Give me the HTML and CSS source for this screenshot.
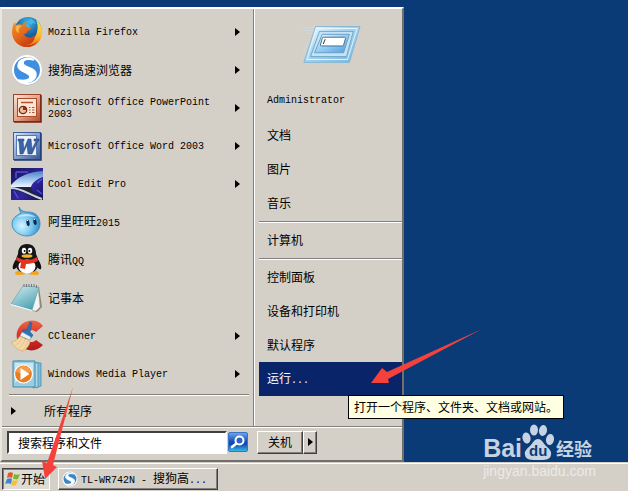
FILE: index.html
```html
<!DOCTYPE html>
<html lang="zh-CN">
<head>
    <meta charset="UTF-8">
    <meta name="viewport" content="width=device-width, initial-scale=1.0">
    <title>开始菜单</title>
    <link rel="stylesheet" href="styles.css">
</head>
<body>
    <main class="desktop">
        <div class="start-menu">
            <div class="menu-body">
                <div class="left-col">
                    <ul class="programs">
                        <li><a href="#">
                            <svg class="icon" viewBox="0 0 32 32" aria-hidden="true">
                                <defs>
                                    <radialGradient id="ffGlobe" cx=".5" cy=".2" r=".8"><stop offset="0" stop-color="#3fb8e8"/><stop offset=".5" stop-color="#1c6cae"/><stop offset="1" stop-color="#123a7c"/></radialGradient>
                                    <linearGradient id="ffFox" x1="0" y1="0" x2=".7" y2="1"><stop offset="0" stop-color="#f0962a"/><stop offset=".5" stop-color="#e66a1c"/><stop offset="1" stop-color="#c2330f"/></linearGradient>
                                    <linearGradient id="ffTail" x1="0" y1="0" x2="0" y2="1"><stop offset="0" stop-color="#fff04a"/><stop offset=".6" stop-color="#fbb62a"/><stop offset="1" stop-color="#e6661a"/></linearGradient>
                                </defs>
                                <circle cx="17" cy="14.500" r="13.500" fill="url(#ffGlobe)"/>
                                <path d="M19 3c3 0 5 2 6 5l-3-1-2 2-2-3zM14 7l4 2 2 4-5 1z" fill="#4cc3ea" opacity=".7"/>
                                <path d="M25 4c4 3 6 8 6 12 0 9-6 15-15 15-5 0-9-2-12-6 8 3 20 1 22-9 1-5 1-8-1-12z" fill="url(#ffTail)"/>
                                <path d="M4 6l1 3c2-1 4-1 6 0 1-2 3-3 5-4-1 2-2 4-1 5 1 2 4 1 5 2 0 2-3 2-4 4 0 1-1 2-3 2 1 4 7 5 11 1 0 7-5 10-10 10 5 1 10-1 13-4-3 4-7 6-11 6C7 31 1 24 1 16c0-4 1-7 3-10z" fill="url(#ffFox)"/>
                                <path d="M5 10c2-1 4-1 6 0-3 1-4 4-3 7-3-1-4-4-3-7z" fill="#f8b24a"/>
                            </svg>
                            <span class="label en">Mozilla Firefox</span><i class="arrow"></i>
                        </a></li>
                        <li><a href="#">
                            <svg class="icon" viewBox="0 0 32 32" aria-hidden="true">
                                <circle cx="16" cy="16.500" r="15" fill="#aaa"/>
                                <circle cx="16" cy="16" r="15" fill="#fff"/>
                                <circle cx="16" cy="16" r="13" fill="#3f8ee0"/>
                                <path d="M23 6C17 2 7 5 7 12c0 6 12 6 12 11 0 3-5 4-12 3 7 5 18 2 18-6 0-7-13-6-13-11 0-3 4-5 11-3z" fill="#fff" stroke="#fff" stroke-width="1.500"/>
                            </svg>
                            <span class="label">搜狗高速浏览器</span><i class="arrow"></i>
                        </a></li>
                        <li><a href="#">
                            <svg class="icon" viewBox="0 0 32 32" aria-hidden="true">
                                <defs><linearGradient id="ppt" x1="0" y1="0" x2="1" y2="1"><stop offset="0" stop-color="#fbe3d3"/><stop offset=".5" stop-color="#e5a58a"/><stop offset="1" stop-color="#b34a2a"/></linearGradient></defs>
                                <rect x="2.500" y="2.500" width="27" height="27" fill="url(#ppt)" stroke="#9c4228"/>
                                <path d="M30 3v27H3" fill="none" stroke="#74230f" stroke-width="1.500"/>
                                <rect x="6.500" y="6.500" width="19" height="18" fill="#fbe6d6" stroke="#a94b2d"/>
                                <path d="M10 10.500h12" stroke="#b55032" stroke-width="1.500"/>
                                <circle cx="12" cy="18" r="3.700" fill="#f4bd9c" stroke="#7d2814" stroke-width="1.300"/>
                                <path d="M12 18v-4a4 4 0 0 1 4 4z" fill="#8b2e18"/>
                                <path d="M18 15.500h1.500M18 18h1.500M18 20.500h1.500M21 15.500h2.500M21 18h2.500M21 20.500h2.500" stroke="#c0522c"/>
                            </svg>
                            <span class="label en">Microsoft Office PowerPoint 2003</span><i class="arrow"></i>
                        </a></li>
                        <li><a href="#">
                            <svg class="icon" viewBox="0 0 32 32" aria-hidden="true">
                                <defs><linearGradient id="word" x1="0" y1="0" x2="1" y2="1"><stop offset="0" stop-color="#dce6f8"/><stop offset=".5" stop-color="#86a0cf"/><stop offset="1" stop-color="#35558f"/></linearGradient></defs>
                                <rect x="2.500" y="2.500" width="27" height="27" fill="url(#word)" stroke="#3d5f9c"/>
                                <path d="M30 3v27H3" fill="none" stroke="#1c3a70" stroke-width="1.500"/>
                                <rect x="5.500" y="5.500" width="20" height="20" fill="#edf3fc" stroke="#5577b2"/>
                                <path d="M7 9h6v2h-1l1 8 4-10h3l1 10 4-8h-2V9h5v2h-1l-6 13h-4l-1-9-4 9H9L8 11H7z" fill="#3b64a8" stroke="#233f78" stroke-width=".5"/>
                            </svg>
                            <span class="label en">Microsoft Office Word 2003</span><i class="arrow"></i>
                        </a></li>
                        <li><a href="#">
                            <svg class="icon" viewBox="0 0 32 32" aria-hidden="true">
                                <defs>
                                    <linearGradient id="cep" x1="0" y1="0" x2="1" y2="1"><stop offset="0" stop-color="#17135c"/><stop offset=".6" stop-color="#3026a0"/><stop offset="1" stop-color="#150f58"/></linearGradient>
                                    <linearGradient id="cepTop" x1="0" y1="0" x2="0" y2="1"><stop offset="0" stop-color="#4d80c6"/><stop offset=".6" stop-color="#a8cbf0"/><stop offset="1" stop-color="#eef6ff"/></linearGradient>
                                </defs>
                                <rect width="32" height="32" fill="url(#cep)"/>
                                <path d="M5 4h12M5 4v6M7 30l-4-7M26 15l5-4M26 22l5 4" stroke="#5550cf" stroke-width="1.500"/>
                                <path d="M0 17C7 9 16 4 32 3v6c-6 2-11 6-12 10H0z" fill="url(#cepTop)"/>
                                <path d="M0 19h20c0 4 5 8 12 11v2h-3C18 29 10 22 0 21z" fill="#20253a"/>
                                <path d="M0 20c11 0 18 7 31 11" fill="none" stroke="#c8d2e2" stroke-width="2"/>
                            </svg>
                            <span class="label en">Cool Edit Pro</span><i class="arrow"></i>
                        </a></li>
                        <li><a href="#">
                            <svg class="icon" viewBox="0 0 32 32" aria-hidden="true">
                                <defs><radialGradient id="ww" cx=".35" cy=".65" r=".7"><stop offset="0" stop-color="#d2f5ff"/><stop offset=".5" stop-color="#7bc8f0"/><stop offset="1" stop-color="#2a83c4"/></radialGradient></defs>
                                <path d="M8 1c2 4 5 5 9 5 8 0 12 5 12 12s-6 12-13 12S1 25 1 18c0-6 4-8 9-11C9 5 8 3 8 1z" fill="url(#ww)" stroke="#3183b8" stroke-width=".8"/>
                                <path d="M6 11c5-4 13-4 19 0-6-1-13-1-19 0z" fill="#e0f7ff" opacity=".7"/>
                                <ellipse cx="17" cy="17" rx="1.600" ry="3.200" fill="#122746" transform="rotate(-8 17 17)"/>
                                <ellipse cx="24" cy="16" rx="1.600" ry="3" fill="#122746" transform="rotate(-8 24 16)"/>
                                <path d="M16 15l1-1M23 14l1-1" stroke="#fff"/>
                            </svg>
                            <span class="label">阿里旺旺<span class="en">2015</span></span>
                        </a></li>
                        <li><a href="#">
                            <svg class="icon" viewBox="0 0 32 32" aria-hidden="true">
                                <path d="M6 27c-3 2-3 4 2 4 4 0 7-1 8-2 1 1 4 2 8 2 5 0 5-2 2-4z" fill="#f3a51b"/>
                                <path d="M6 14c-3 4-5 8-4 11 2 1 4-2 5-4M26 14c3 4 5 8 4 11-2 1-4-2-5-4" fill="#111"/>
                                <path d="M16 0c-6 0-9 4-9 10-2 4-3 8-2 12 1 5 6 7 11 7s10-2 11-7c1-4 0-8-2-12 0-6-3-10-9-10z" fill="#151517"/>
                                <ellipse cx="16" cy="22.500" rx="8.500" ry="7" fill="#fff"/>
                                <ellipse cx="13" cy="6.800" rx="2.200" ry="3" fill="#fff"/><ellipse cx="19" cy="6.800" rx="2.200" ry="3" fill="#fff"/>
                                <circle cx="13.600" cy="7" r="1" fill="#111"/><circle cx="18.400" cy="7" r="1" fill="#111"/>
                                <ellipse cx="16" cy="12" rx="5.500" ry="1.800" fill="#f4b224"/>
                                <path d="M6 13c6 4 14 4 20 0l1 4c-4 2-8 3-12 3l-1 5-5-1 1-5-5-3z" fill="#e2341f"/>
                            </svg>
                            <span class="label">腾讯<span class="en">QQ</span></span>
                        </a></li>
                        <li><a href="#">
                            <svg class="icon" viewBox="0 0 32 32" aria-hidden="true">
                                <defs><linearGradient id="note" x1="0" y1="0" x2=".6" y2="1"><stop offset="0" stop-color="#d5eef2"/><stop offset="1" stop-color="#4fa3b4"/></linearGradient></defs>
                                <path d="M28 5l3 20-5 5-7-2z" fill="#8b8574"/>
                                <path d="M27 5l2 20-4 4-7-1z" fill="#f4f5f0" stroke="#a9aca6" stroke-width=".5"/>
                                <path d="M12 4l16 1-7 23L0 22z" fill="url(#note)" stroke="#5c9ba8" stroke-width=".6"/>
                                <path d="M0 22l21 6v1L0 23z" fill="#fff"/>
                                <path d="M13 5V2M15.500 5V2M18 5V2M20.500 5V2M23 5V2M25.500 6V3" stroke="#777"/>
                            </svg>
                            <span class="label">记事本</span>
                        </a></li>
                        <li><a href="#">
                            <svg class="icon" viewBox="0 0 32 32" aria-hidden="true">
                                <defs><linearGradient id="ccl" x1="0" y1="0" x2="0" y2="1"><stop offset="0" stop-color="#ee6549"/><stop offset=".5" stop-color="#d93125"/><stop offset="1" stop-color="#b01b18"/></linearGradient></defs>
                                <path d="M32 6C27-1 17-1 11 4c-7 6-7 16-1 22 6 6 16 6 22-1l-7-5c-4 4-10 2-10-4 0-5 6-8 10-4z" fill="url(#ccl)"/>
                                <path d="M19 2l2 1-2 9 3 3-2 3-9-5 1-3 4 0z" fill="#2c75b8" stroke="#194e85" stroke-width=".5"/>
                                <path d="M11 12l9 5-1 3-10-4z" fill="#e8f0f6" stroke="#7e93a5" stroke-width=".5"/>
                                <path d="M9 16l10 5c0 4-3 7-6 10-5 0-10-4-13-9 4 0 7-3 9-6z" fill="#f2d8a4" stroke="#c09b60" stroke-width=".5"/>
                                <path d="M11 18c-2 4-4 6-7 7M14 19c-1 5-4 7-6 9M17 21c-1 4-2 6-5 9" fill="none" stroke="#d9b67c" stroke-width=".6"/>
                            </svg>
                            <span class="label en">CCleaner</span><i class="arrow"></i>
                        </a></li>
                        <li><a href="#">
                            <svg class="icon" viewBox="0 0 32 32" aria-hidden="true">
                                <path d="M8 3l22 2v23l-5 2z" fill="#7dbdd7" stroke="#3c86a7" stroke-width=".7"/>
                                <path d="M6 3l21 2v24l-5 1z" fill="#a8d8e9" stroke="#4590b0" stroke-width=".7"/>
                                <path d="M2 3h22v26H2z" fill="#9bcde2" stroke="#3d8aad"/>
                                <path d="M4 5h18v11C14 17 8 20 4 25z" fill="#d6eef6" opacity=".8"/>
                                <circle cx="12.500" cy="16" r="9" fill="#ec7b1e" stroke="#fff" stroke-width="1.200"/>
                                <path d="M5 14c2-8 13-8 15 0-4 1-10 2-15 0z" fill="#f7ae62" opacity=".7"/>
                                <path d="M9.500 10v12l9-6z" fill="#fff"/>
                            </svg>
                            <span class="label en">Windows Media Player</span><i class="arrow"></i>
                        </a></li>
                    </ul>
                    <hr class="rule">
                    <a class="all-programs" href="#"><i class="arrow"></i><span>所有程序</span></a>
                </div>

                <div class="right-col">
                    <div class="user-picture">
                        <svg viewBox="0 0 64 40" aria-hidden="true">
                            <defs>
                                <linearGradient id="runOuter" x1="0" y1="0" x2="1" y2="1"><stop offset="0" stop-color="#fff"/><stop offset=".4" stop-color="#a9d7f2"/><stop offset="1" stop-color="#79b4dc"/></linearGradient>
                                <linearGradient id="runInner" x1="0" y1="0" x2="1" y2="1"><stop offset="0" stop-color="#f2faff"/><stop offset=".45" stop-color="#9fd2f4"/><stop offset="1" stop-color="#4c9bdc"/></linearGradient>
                            </defs>
                            <path d="M5 3h12M3 6h12M6 9h8M3 31l5-12" stroke="#c4e0ee" opacity=".7"/>
                            <path d="M16 2h46L51 39H4z" fill="url(#runOuter)" stroke="#84b7d4"/>
                            <path d="M17 4h42L49 36H7z" fill="none" stroke="#e3f4fd"/>
                            <path d="M20 7h35l-7 26H11z" fill="#c5e3f4" stroke="#6ea6c9"/>
                            <path d="M23 10h28l-6 19H15z" fill="url(#runInner)" stroke="#659fc9"/>
                            <path d="M24 13h22q1 0 1 1l-2 7q0 1-1 1H22q-1 0-1-1l2-7q0-1 1-1z" fill="#fff" stroke="#486d8c"/>
                            <path d="M26 15l-2 5" stroke="#333"/>
                        </svg>
                    </div>
                    <ul class="places">
                        <li><a class="en" href="#">Administrator</a></li>
                        <li><a href="#">文档</a></li>
                        <li><a href="#">图片</a></li>
                        <li><a href="#">音乐</a></li>
                    </ul>
                    <hr class="rule">
                    <ul class="places">
                        <li><a href="#">计算机</a></li>
                    </ul>
                    <hr class="rule">
                    <ul class="places">
                        <li><a href="#">控制面板</a></li>
                        <li><a href="#">设备和打印机</a></li>
                        <li><a href="#">默认程序</a></li>
                        <li class="run">
                            <a class="selected" href="#" aria-describedby="run-tip"><span>运行<span class="en">...</span></span></a>
                            <div class="tooltip" id="run-tip" role="tooltip">打开一个程序、文件夹、文档或网站。</div>
                            <svg class="pointer run-pointer" viewBox="0 0 112 56" aria-hidden="true">
                                <path d="M111 1L17 51l1 4H0l11-15 5 4z" fill="#f5413c"/>
                            </svg>
                        </li>
                    </ul>
                </div>
            </div>

            <div class="menu-footer">
                <form class="search" action="#">
                    <input type="text" aria-label="搜索程序和文件" placeholder="搜索程序和文件">
                    <button type="submit" aria-label="搜索">
                        <svg viewBox="0 0 20 20" aria-hidden="true">
                            <defs><linearGradient id="find" x1="0" y1="0" x2="0" y2="1"><stop offset="0" stop-color="#74a8ea"/><stop offset=".45" stop-color="#1d50bd"/><stop offset=".6" stop-color="#1244ae"/><stop offset="1" stop-color="#35c0ee"/></linearGradient></defs>
                            <rect x=".5" y=".5" width="19" height="19" rx="1.500" fill="url(#find)" stroke="#3b72c4"/>
                            <path d="M9 11l-5 4" stroke="#fff" stroke-width="2.600" stroke-linecap="round"/>
                            <circle cx="11.500" cy="8.500" r="4" fill="#2b62c8" stroke="#fff" stroke-width="2"/>
                        </svg>
                    </button>
                </form>
                <div class="power">
                    <button class="shutdown" type="button">关机</button>
                    <button class="more" type="button" aria-label="更多关机选项"><i class="arrow"></i></button>
                </div>
            </div>
        </div>

        <div class="watermark">
            <div class="brand">
                <span class="bai">Bai</span>
                <span class="paw">
                    <svg viewBox="0 0 32 36" aria-hidden="true">
                        <g fill="#c6d3e2">
                            <ellipse cx="4.500" cy="14" rx="4" ry="5.500" transform="rotate(-12 4.500 14)"/>
                            <ellipse cx="12" cy="6" rx="4" ry="5.500"/>
                            <ellipse cx="21" cy="6.500" rx="4" ry="5.500" transform="rotate(10 21 6.500)"/>
                            <ellipse cx="28" cy="15.500" rx="4" ry="5.500" transform="rotate(8 28 15.500)"/>
                            <path d="M16 15c4 0 5 4 8 7s6 5 5 9c-1 5-6 5-13 5S4 36 3 31c-1-4 2-6 5-9s4-7 8-7z"/>
                        </g>
                    </svg>
                    <span class="du">du</span>
                </span>
                <span class="jingyan">经验</span>
            </div>
            <div class="site">jingyan.baidu.com</div>
        </div>
    </main>

    <footer class="taskbar">
        <button class="start" type="button">
            <svg viewBox="0 0 16 16" aria-hidden="true">
                <path d="M3 2c2-1 4-1 5 0L7 7C5 6 4 6 2 7z" fill="#e4582b"/>
                <path d="M9 3c2 1 4 1 6 0l-2 5c-2 1-3 0-5 0z" fill="#79b82e"/>
                <path d="M2 8c2-1 3-1 5 0l-1 5c-2-1-4-1-6 0z" fill="#3b86cf"/>
                <path d="M8 9c1 1 3 1 5 0l-2 5c-1 1-3 1-5 0z" fill="#f6c22c"/>
            </svg>
            <span>开始</span>
        </button>
        <button class="task" type="button">
            <svg viewBox="0 0 32 32" aria-hidden="true">
                <circle cx="16" cy="16" r="15" fill="#fff"/>
                <circle cx="16" cy="16" r="13" fill="#3b86c8"/>
                <path d="M23 6C17 2 7 5 7 12c0 6 12 6 12 11 0 3-5 4-12 3 7 5 18 2 18-6 0-7-13-6-13-11 0-3 4-5 11-3z" fill="#fff" stroke="#fff" stroke-width="1.500"/>
            </svg>
            <span><span class="en">TL-WR742N - </span>搜狗高<span class="en">...</span></span>
        </button>
        <svg class="pointer start-pointer" viewBox="0 0 34 96" aria-hidden="true">
            <path d="M31 1L11 79l4 2L3 93 0 75l5 2z" fill="#f5413c"/>
        </svg>
    </footer>
</body>
</html>
```
FILE: styles.css
```css
* {
    margin: 0;
    padding: 0;
    box-sizing: border-box;
}

body {
    display: flex;
    flex-direction: column;
    min-height: 100vh;
    font-family: "Noto Sans CJK SC", sans-serif;
    font-size: 12px;
    line-height: 14px;
    color: #000;
    background: #0a3b76;
}

ul {
    list-style: none;
}

a {
    color: inherit;
    text-decoration: none;
}

button,
input {
    font: inherit;
    color: inherit;
}

/* half-width text, 6px per character */
.en {
    font-family: "Liberation Mono", monospace;
    font-size: 10px;
    line-height: 12px;
}

.arrow {
    width: 0;
    height: 0;
    border: 4px solid transparent;
    border-left: 5px solid #000;
    border-right: 0;
}

.desktop {
    position: relative;
    flex: 1;
    display: flex;
    flex-direction: column;
    justify-content: flex-end;
    align-items: flex-start;
}

/* start menu */
.start-menu {
    background: #d4d0c8;
    border: 2px solid;
    border-color: #fff #6f6f6c #6f6f6c #fff;
    border-left-color: #e9e7e2;
}

.menu-body {
    display: grid;
    grid-template-columns: 252px 148px;
    border-bottom: 1px solid #808080;
    box-shadow: 0 1px #fff;
}

.left-col {
    padding-top: 4px;
    border-right: 1px solid #808080;
    box-shadow: 1px 0 #fff;
}

.programs a {
    display: flex;
    align-items: center;
    height: 38px;
    padding: 0 13px 0 9px;
}

.icon {
    flex: none;
    width: 32px;
    height: 32px;
    margin-right: 5px;
}

.label {
    flex: 1;
    padding-right: 20px;
}

.label.en {
    padding-top: 2px;
}

.rule {
    height: 2px;
    border: 0;
    border-top: 1px solid #808080;
    border-bottom: 1px solid #fff;
    margin: 1px 0 0;
}

.left-col .rule {
    margin: 1px 4px 0 7px;
}

.all-programs {
    display: flex;
    align-items: center;
    gap: 28px;
    height: 30px;
    padding-left: 9px;
}

.right-col {
    padding: 15px 0 30px 5px;
}

.user-picture {
    display: flex;
    justify-content: center;
    height: 60px;
}

.user-picture svg {
    width: 62px;
    height: 40px;
}

.places a {
    display: flex;
    align-items: center;
    height: 34px;
    padding-left: 8px;
}

.places .selected {
    color: #fff;
    background: #0a246a;
}

.run {
    position: relative;
}

.tooltip {
    position: absolute;
    z-index: 2;
    top: 33px;
    left: 89px;
    padding: 4px 5px;
    border: 1px solid #000;
    background: #ffffe1;
    white-space: nowrap;
}

.pointer {
    position: absolute;
    z-index: 3;
    pointer-events: none;
}

.run-pointer {
    top: -34px;
    left: 112px;
    width: 112px;
    height: 56px;
}

.menu-footer {
    display: grid;
    grid-template-columns: 255px auto;
    align-items: center;
    justify-content: start;
    height: 33px;
    padding-bottom: 3px;
}

.search {
    display: flex;
    align-items: center;
    padding-left: 5px;
}

.search input {
    width: 220px;
    height: 23px;
    padding: 0 9px;
    border: 2px solid;
    border-color: #404040 #fff #fff #404040;
    background: #fff;
}

.search input::placeholder {
    color: #000;
    opacity: 1;
}

.search button {
    width: 20px;
    height: 20px;
    margin-left: 1px;
    border: 0;
    background: none;
}

.search svg {
    display: block;
}

.power {
    display: flex;
}

.power button,
.task {
    background: #d4d0c8;
    border: 1px solid;
    border-color: #fff #404040 #404040 #fff;
    box-shadow: inset -1px -1px #808080;
}

.power button {
    display: flex;
    align-items: center;
    justify-content: center;
    height: 23px;
}

.shutdown {
    width: 46px;
}

.more {
    width: 14px;
}

/* taskbar */
.taskbar {
    position: relative;
    display: flex;
    align-items: center;
    gap: 8px;
    height: 29px;
    padding: 4px 2px 0;
    background: #d4d0c8;
    border-top: 1px solid #d4d0c8;
    box-shadow: inset 0 1px #fff;
}

.taskbar button {
    display: flex;
    align-items: center;
    height: 22px;
}

.start {
    width: 48px;
    padding-left: 2px;
    border: 1px solid;
    border-color: #404040 #fff #fff #404040;
    box-shadow: inset 1px 1px #808080;
    background: #dedbd5;
}

.start svg,
.task svg {
    flex: none;
    width: 16px;
    height: 16px;
}

.task {
    width: 160px;
    gap: 3px;
    padding-left: 3px;
    white-space: pre;
}

.start-pointer {
    left: 42px;
    bottom: 9px;
    width: 34px;
    height: 96px;
}

/* watermark */
.watermark {
    position: absolute;
    z-index: 1;
    right: 32px;
    bottom: -17px;
    color: #c6d3e2;
    font-family: "Liberation Sans", sans-serif;
}

.brand {
    display: flex;
    align-items: flex-end;
    height: 36px;
    margin-bottom: 4px;
}

.bai {
    font-size: 25px;
    line-height: 24px;
    font-weight: bold;
}

.paw {
    position: relative;
    width: 32px;
    height: 36px;
}

.du {
    position: absolute;
    left: 7px;
    bottom: 1px;
    font-size: 15px;
    line-height: 16px;
    font-weight: bold;
    color: #0a3b76;
}

.jingyan {
    padding-left: 2px;
    font-family: "Noto Sans CJK SC", sans-serif;
    font-size: 18px;
    line-height: 24px;
    font-weight: bold;
}

.site {
    font-size: 14px;
    line-height: 15px;
    color: #eceae6;
}
```
